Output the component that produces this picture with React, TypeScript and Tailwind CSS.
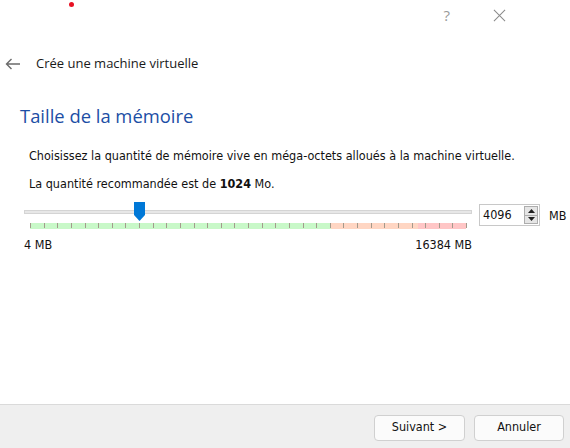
const ticks = Array.from({ length: 33 }, (_, i) => i * 13.625)

function ArrowLeft() {
  return (
    <svg width="16" height="12" viewBox="0 0 16 12" fill="none" stroke="#6b6b6b" strokeWidth="1.4">
      <path d="M15 6H1.5M6.5 1L1.5 6l5 5" />
    </svg>
  )
}

function SpinArrows() {
  return (
    <div className="flex flex-col w-[14px] h-[18px] border border-[#adadad] bg-[#e5e5e5]">
      <div className="flex-1 flex items-center justify-center border-b border-[#adadad]">
        <svg width="7" height="4" viewBox="0 0 7 4"><path d="M0 4L3.5 0L7 4Z" fill="#1f1f1f" /></svg>
      </div>
      <div className="flex-1 flex items-center justify-center">
        <svg width="7" height="4" viewBox="0 0 7 4"><path d="M0 0L3.5 4L7 0Z" fill="#1f1f1f" /></svg>
      </div>
    </div>
  )
}

function MemorySlider() {
  return (
    <div className="relative w-[448px] h-[28px]">
      <div className="mt-[7px] h-[4px] bg-[#e7e7e7] border border-[#d4d4d4]" />
      <div className="ml-[6px] mt-[9px] w-[436px] h-[6px] flex relative">
        <div className="w-[301px] bg-[#c8f8c8]" />
        <div className="w-[87px] bg-[#ffd6c3]" />
        <div className="flex-1 bg-[#ffc6c6]" />
        {ticks.map((t, i) => (
          <div key={i} className="absolute top-0 w-px h-[5px] bg-[#a39a8c]" style={{ left: Math.round(t) }} />
        ))}
      </div>
      <svg className="absolute left-[110px] top-[-1px]" width="11" height="19" viewBox="0 0 11 19">
        <path d="M0 0H11V13L5.5 19L0 13Z" fill="#0078d7" />
      </svg>
    </div>
  )
}

export default function App() {
  return (
    <div className="w-[570px] h-[448px] flex flex-col bg-white overflow-hidden" style={{ fontFamily: 'Tahoma, "DejaVu Sans Condensed", sans-serif' }}>
      <div className="relative h-[30px] flex items-center justify-end pr-[64px] gap-[43px]">
        <div className="absolute left-[69px] top-[2px] w-[5px] h-[5px] rounded-full bg-[#e81123]" />
        <span className="text-[15px] text-[#9a9a9a]" style={{ fontFamily: '"Open Sans", sans-serif' }}>?</span>
        <svg width="13" height="13" viewBox="0 0 14 14" stroke="#8a8a8a" strokeWidth="1.1">
          <path d="M1 1L13 13M13 1L1 13" />
        </svg>
      </div>

      <div className="flex items-center h-[28px] mt-[20px] pl-[5px] gap-[15px]">
        <ArrowLeft />
        <span className="text-[13px] text-[#1a1a1a]" style={{ fontFamily: '"Open Sans", sans-serif' }}>Crée une machine virtuelle</span>
      </div>

      <div className="pl-[20px] mt-[24px] text-[18.4px] text-[#1c4ea5]" style={{ fontFamily: '"Open Sans", sans-serif' }}>
        Taille de la mémoire
      </div>

      <div className="pl-[29px] mt-[17px] text-[12.5px] text-[#111]">
        Choisissez la quantité de mémoire vive en méga-octets alloués à la machine virtuelle.
      </div>
      <div className="pl-[29px] mt-[10px] text-[12.5px] text-[#111]">
        La quantité recommandée est de <b>1024</b> Mo.
      </div>

      <div className="flex items-start pl-[24px] mt-[9px]">
        <MemorySlider />
        <div className="ml-[7px] mt-[1px] w-[61px] h-[22px] border border-[#c8c8c8] flex items-center justify-between pl-[3px] pr-[1px]">
          <span className="text-[12.5px] text-[#111]">4096</span>
          <SpinArrows />
        </div>
        <span className="ml-[9px] mt-[4px] text-[12.5px] text-[#111]">MB</span>
      </div>

      <div className="flex justify-between w-[448px] ml-[24px] mt-[5px] text-[12.5px] text-[#111]">
        <span>4 MB</span>
        <span>16384 MB</span>
      </div>

      <div className="flex-1" />

      <div className="h-[44px] bg-[#efefef] border-t border-[#dadada] flex items-center justify-end gap-[9px] pr-[6px] pt-[2px]">
        <button className="w-[91px] h-[26px] rounded-[4px] border border-[#d0d0d0] bg-[#fbfbfb] text-[12.5px] text-[#111]">Suivant &gt;</button>
        <button className="w-[90px] h-[26px] rounded-[4px] border border-[#d0d0d0] bg-[#fbfbfb] text-[12.5px] text-[#111]">Annuler</button>
      </div>
    </div>
  )
}
